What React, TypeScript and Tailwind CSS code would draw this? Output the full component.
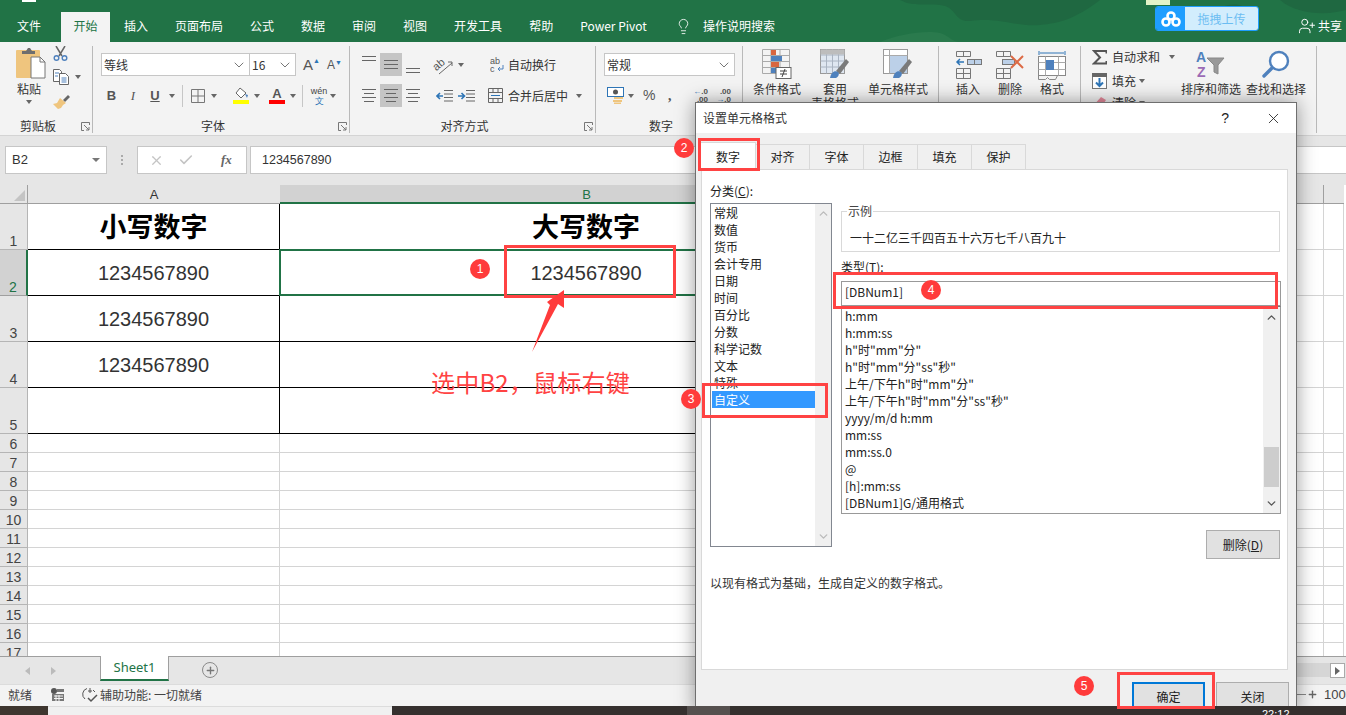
import type { ReactNode } from "react";
import { X, Check, ChevronUp, ChevronDown, Lightbulb, UserPlus, Plus } from "lucide-react";

const tabs = ["插入", "页面布局", "公式", "数据", "审阅", "视图", "开发工具", "帮助", "Power Pivot"];
const categories = ["常规", "数值", "货币", "会计专用", "日期", "时间", "百分比", "分数", "科学记数", "文本", "特殊", "自定义"];
const formats = [
  "h:mm",
  "h:mm:ss",
  'h"时"mm"分"',
  'h"时"mm"分"ss"秒"',
  '上午/下午h"时"mm"分"',
  '上午/下午h"时"mm"分"ss"秒"',
  "yyyy/m/d h:mm",
  "mm:ss",
  "mm:ss.0",
  "@",
  "[h]:mm:ss",
  "[DBNum1]G/通用格式",
];
const dialogTabs = ["对齐", "字体", "边框", "填充", "保护"];
const rowNumbers = [1, 2, 3, 4, 5, 6, 7, 8, 9, 10, 11, 12, 13, 14, 15, 16, 17];

function Caret() {
  return <span className="inline-block w-0 h-0 border-x-[3.5px] border-x-transparent border-t-[4px] border-t-[#666]" />;
}

function Sep() {
  return <span className="w-px h-[22px] bg-[#c6c6c6]" />;
}

function Launcher() {
  return (
    <svg className="absolute right-[2px] top-[3px]" width="9" height="9" viewBox="0 0 9 9" fill="none" stroke="#777">
      <path d="M.5 3V.5H8.5V3M.5 3v5.5H3M3 3l5 5M8 5v3H5" />
    </svg>
  );
}

function Group({ className, label, launcher, children }: { className: string; label?: string; launcher?: boolean; children: ReactNode }) {
  return (
    <div className={`flex flex-col shrink-0 mt-[4px] h-[87px] border-r border-[#b9b9b9] ${className}`}>
      <div className="flex-1 min-h-0">{children}</div>
      <div className="relative h-[14px] leading-[14px] pr-[16px] text-center text-[12px] text-[#333]">
        {label}
        {launcher && <Launcher />}
      </div>
    </div>
  );
}

function Select({ className, text }: { className: string; text: string }) {
  return (
    <div className={`h-[23px] flex items-center justify-between bg-white border border-[#c6c6c6] pl-[2px] pr-[2px] text-[12px] text-[#333] ${className}`}>
      <span>{text}</span>
      <ChevronDown size={16} strokeWidth={1.1} color="#444" />
    </div>
  );
}

function Lines({ widths, on, offset }: { widths: number[]; on?: boolean; offset?: string }) {
  return (
    <span className={`w-[22px] h-[23px] flex flex-col gap-[3px] ${offset ?? "justify-center"} items-center ${on ? "bg-[#c5c5c5]" : ""}`}>
      {widths.map((w, i) => (
        <span key={i} className={`h-px bg-[#666] ${w === 14 ? "w-[14px]" : w === 10 ? "w-[10px]" : "w-[12px]"}`} />
      ))}
    </span>
  );
}

function BigButton({ className, icon, label }: { className: string; icon: ReactNode; label: string }) {
  return (
    <div className={`flex flex-col items-center shrink-0 ${className}`}>
      <div className="h-[32px] flex items-center">{icon}</div>
      <div className="text-[12px] leading-[14px] mt-[2px] text-[#333] whitespace-pre text-center">{label}</div>
    </div>
  );
}

function PasteIcon() {
  return (
    <svg width="30" height="33" viewBox="0 0 30 33">
      <rect x="0" y="4" width="24" height="28" rx="1" fill="#efc57e" />
      <path d="M6 8V5h4l2-3h2l2 3h3v3z" fill="#6e6e6e" />
      <path d="M15 11h9l5 5v16H15z" fill="#fff" stroke="#777" />
      <path d="M24 11v5h5" fill="none" stroke="#777" />
    </svg>
  );
}

function CutIcon() {
  return (
    <svg width="15" height="15" viewBox="0 0 15 15" fill="none">
      <path d="M3 0l6 10M12 0L6 10" stroke="#666" strokeWidth="1.5" />
      <circle cx="3.5" cy="12" r="2.3" stroke="#4f81bd" strokeWidth="1.4" />
      <circle cx="11.5" cy="12" r="2.3" stroke="#4f81bd" strokeWidth="1.4" />
    </svg>
  );
}

function CopyIcon() {
  return (
    <svg width="16" height="16" viewBox="0 0 16 16" fill="none">
      <path d="M.5.5h6l2 2v10h-8z" fill="#fff" stroke="#666" />
      <path d="M6.5 4.5h6l3 3v8h-9z" fill="#fff" stroke="#666" />
      <path d="M2 4h4M2 7h3M8.500 9h5M8.500 11h5M8.500 13h5" stroke="#4f81bd" />
    </svg>
  );
}

function BrushIcon() {
  return (
    <svg width="17" height="14" viewBox="0 0 17 14">
      <path d="M10 5l5-5 2 2-5 5z" fill="#666" />
      <path d="M7 3l6 5-3 2-2 3-3 1-5-5 4-1z" fill="#efc57e" />
    </svg>
  );
}

function BorderIcon() {
  return (
    <svg width="14" height="14" viewBox="0 0 14 14" fill="none" stroke="#777">
      <path d="M.5.5h13v13H.5zM7 .5v13M.5 7h13" />
    </svg>
  );
}

function FillIcon() {
  return (
    <span className="w-[16px] flex flex-col items-center">
      <svg width="15" height="13" viewBox="0 0 15 13" fill="none">
        <path d="M6 1l6 5-5 5-5-5z" stroke="#666" fill="#fff" />
        <path d="M11 7l3 1-1 3z" fill="#4f81bd" />
      </svg>
      <span className="w-[16px] h-[4px] bg-[#ffff00]" />
    </span>
  );
}

function FontColorIcon() {
  return (
    <span className="w-[16px] flex flex-col items-center leading-none">
      <span className="h-[12px] text-[13px] leading-[12px] font-bold text-[#555] font-['Liberation_Sans']">A</span>
      <span className="w-[16px] h-[4px] bg-[#ff0000]" />
    </span>
  );
}

function WrapIcon() {
  return (
    <svg width="16" height="16" viewBox="0 0 16 16" fill="none">
      <text x="0" y="7" fontSize="9" fill="#555" fontFamily="Liberation Sans">ab</text>
      <text x="0" y="15" fontSize="9" fill="#555" fontFamily="Liberation Sans">c</text>
      <path d="M13 8v4H8m2-2l-2 2 2 2" stroke="#4f81bd" />
    </svg>
  );
}

function OrientIcon() {
  return (
    <svg width="26" height="20" viewBox="0 0 26 20" fill="none">
      <text x="2" y="13" fontSize="11" fill="#555" fontFamily="Liberation Sans" transform="rotate(-40 8 10)">ab</text>
      <path d="M8 19L21 8m-4-1h4v4" stroke="#666" />
    </svg>
  );
}

function IndentIcon({ flip }: { flip?: boolean }) {
  return (
    <svg width="18" height="14" viewBox="0 0 18 14" fill="none">
      <path d="M8 1.500h9M8 5h9M8 8.500h9M8 12h9" stroke="#666" />
      <path d={flip ? "M0 7h6M3.500 4L6.500 7l-3 3" : "M7 7H1M4 4L1 7l3 3"} stroke="#2e75b6" strokeWidth="1.600" />
    </svg>
  );
}

function MergeIcon() {
  return (
    <svg width="15" height="15" viewBox="0 0 15 15" fill="none">
      <path d="M.5.500h14v14H.5zM.5 4.500h14M.5 10.500h14M5 .500v4M10 .500v4M5 10.500v4M10 10.500v4" stroke="#666" />
      <path d="M3 7.500h9" stroke="#2e75b6" />
    </svg>
  );
}

function CurrencyIcon() {
  return (
    <svg width="17" height="17" viewBox="0 0 17 17">
      <rect x=".5" y=".5" width="16" height="9" fill="#fff" stroke="#2e75b6" />
      <circle cx="8.500" cy="5" r="2.500" fill="#555" />
      <rect x="7" y="10" width="9" height="2" fill="#efc57e" />
      <rect x="6" y="13" width="9" height="2" fill="#efc57e" />
      <rect x="7" y="15.500" width="7" height="1.500" fill="#efc57e" />
    </svg>
  );
}

function DecimalIcon({ more }: { more?: boolean }) {
  return (
    <span className="w-[20px] flex flex-col text-[8px] leading-[8px] text-[#555] font-['Liberation_Sans'] font-bold items-end">
      <span>
        {more && <span className="text-[#2e75b6]">←</span>}
        {more ? ".0" : ".00"}
      </span>
      <span>
        {!more && <span className="text-[#2e75b6]">→</span>}
        {more ? ".00" : ".0"}
      </span>
    </span>
  );
}

function CondIcon() {
  return (
    <svg width="30" height="30" viewBox="0 0 30 30" fill="none">
      <path d="M.5.500h27v24H.5zM9 .500v24M18 .500v24M.5 6.500h27M.5 12.500h27M.5 18.500h27" stroke="#aaa" />
      <rect x="9" y="1" width="5" height="5" fill="#d9663f" />
      <rect x="9" y="7" width="11" height="5" fill="#4f81bd" />
      <rect x="9" y="13" width="8" height="5" fill="#d9663f" />
      <rect x="9" y="19" width="5" height="5" fill="#4f81bd" />
      <rect x="14" y="18.500" width="15" height="11" fill="#fff" stroke="#666" />
      <path d="M18 22h7M18 25h7M23 20l-3 8" stroke="#444" />
    </svg>
  );
}

function TableIcon() {
  return (
    <svg width="30" height="30" viewBox="0 0 30 30" fill="none">
      <rect x=".5" y=".5" width="24" height="24" fill="#dfe7f1" stroke="#999" />
      <path d="M.5 6h24M.5 12h24M.5 18h24M6.500 .500v24M12.500 .500v24M18.500 .500v24" stroke="#aab4c2" />
      <rect x=".5" y=".5" width="24" height="5" fill="#bdbdbd" />
      <path d="M16 22l10-12 3 3-9 12z" fill="#7a7a7a" />
      <path d="M10 29c1-6 5-8 8-6 2 2 0 5-2 6z" fill="#4f81bd" />
    </svg>
  );
}

function StyleIcon() {
  return (
    <svg width="30" height="30" viewBox="0 0 30 30" fill="none">
      <rect x=".5" y=".5" width="24" height="24" fill="#fff" stroke="#999" />
      <path d="M.5 6.500h24M6.500 .500v24" stroke="#aaa" />
      <rect x="7" y="7" width="17" height="17" fill="#bcd0e8" />
      <path d="M16 22l10-12 3 3-9 12z" fill="#7a7a7a" />
      <path d="M10 29c1-6 5-8 8-6 2 2 0 5-2 6z" fill="#4f81bd" />
    </svg>
  );
}

function InsertIcon() {
  return (
    <svg width="27" height="29" viewBox="0 0 27 29" fill="none">
      <path d="M1.500 1.500h14v5h-14zM8.500 1.500v5M1.500 18.500h14v10h-14zM8.500 18.500v10M1.500 23.500h14" stroke="#777" />
      <rect x="12.500" y="9.500" width="14" height="5" fill="#bcd0e8" stroke="#777" />
      <path d="M19.500 9.500v5" stroke="#777" />
      <path d="M9 12H2m3-3l-3 3 3 3" stroke="#2e75b6" strokeWidth="1.500" />
    </svg>
  );
}

function DeleteIcon() {
  return (
    <svg width="30" height="29" viewBox="0 0 30 29" fill="none">
      <path d="M1.500 1.500h14v5h-14zM8.500 1.500v5M1.500 18.500h14v10h-14zM8.500 18.500v10M1.500 23.500h14" stroke="#777" />
      <rect x="7.500" y="9.500" width="12" height="5" fill="#bcd0e8" stroke="#777" />
      <path d="M16 6l12 12M28 6L16 18" stroke="#dc6a45" strokeWidth="2" />
    </svg>
  );
}

function FormatIcon() {
  return (
    <svg width="28" height="31" viewBox="0 0 28 31" fill="none">
      <path d="M1 2v4M27 2v4M2 4h24" stroke="#2e75b6" />
      <rect x=".5" y="7.500" width="27" height="19" fill="#fff" stroke="#888" />
      <path d="M7.500 7.500v19M20.500 7.500v19M.5 13.500h27M.5 20.500h27" stroke="#aaa" />
      <rect x="8" y="11" width="8" height="10" fill="#4f81bd" />
      <path d="M.5 26.500v4h7l2-2 2 2h6l2-4" stroke="#888" />
    </svg>
  );
}

function SigmaIcon() {
  return (
    <svg width="15" height="15" viewBox="0 0 15 15" fill="none">
      <path d="M14.500 3.500V1H2l6 6.500L2 13.500h12.500V11" stroke="#555" strokeWidth="2" />
    </svg>
  );
}

function FillDownIcon() {
  return (
    <svg width="15" height="16" viewBox="0 0 15 16" fill="none">
      <rect x=".5" y=".5" width="14" height="15" fill="#fff" stroke="#777" />
      <rect x="0" y="0" width="15" height="4" fill="#666" />
      <path d="M7.500 5v8M4 9.500l3.500 3.500L11 9.500" stroke="#2e75b6" strokeWidth="2" />
    </svg>
  );
}

function EraserIcon() {
  return (
    <svg width="15" height="14" viewBox="0 0 15 14">
      <path d="M9 1l5 3-6 9H3L1 10z" fill="#e58a9b" />
    </svg>
  );
}

function SortIcon() {
  return (
    <svg className="overflow-visible" width="30" height="28" viewBox="0 0 30 28" fill="none">
      <text x="0" y="12" fontSize="14" fontWeight="700" fill="#4f81bd" fontFamily="Liberation Sans">A</text>
      <text x="1" y="27" fontSize="14" fontWeight="700" fill="#9b6bb5" fontFamily="Liberation Sans">Z</text>
      <path d="M11 8h17l-6 7v9l-4-2v-7z" fill="#999" stroke="#888" />
    </svg>
  );
}

function FindIcon() {
  return (
    <svg width="28" height="28" viewBox="0 0 28 28" fill="none">
      <circle cx="17" cy="11" r="9" stroke="#4f81bd" strokeWidth="2.400" fill="#fff" />
      <path d="M10 18l-8 8" stroke="#4f81bd" strokeWidth="3.400" strokeLinecap="round" />
    </svg>
  );
}

function Ribbon() {
  return (
    <div className="h-[94px] shrink-0 flex bg-[#f3f3f3] border-b border-[#d4d4d4]">
      <Group className="w-[93px]" label="剪贴板" launcher>
        <div className="flex pl-[12px]">
          <div className="w-[34px] flex flex-col items-center">
            <span className="flex ml-[4px]"><PasteIcon /></span>
            <span className="text-[12px] leading-[14px] mt-[3px] text-[#333]">粘贴</span>
            <span className="flex mt-[4px]"><Caret /></span>
          </div>
          <div className="ml-[7px] flex flex-col">
            <CutIcon />
            <div className="flex items-center gap-[6px] mt-[8px]"><CopyIcon /><Caret /></div>
            <div className="mt-[10px]"><BrushIcon /></div>
          </div>
        </div>
      </Group>
      <Group className="w-[257px]" label="字体" launcher>
        <div className="pl-[8px] pt-[7px]">
          <div className="flex items-center">
            <Select className="w-[149px]" text="等线" />
            <Select className="w-[47px] -ml-px" text="16" />
            <span className="ml-[7px] w-[16px] text-[15px] text-[#555] leading-none font-['Liberation_Sans'] flex items-start">A<span className="text-[#2e75b6] text-[7px]">▲</span></span>
            <span className="ml-[8px] w-[16px] text-[12px] text-[#555] leading-none font-['Liberation_Sans'] flex items-start">A<span className="text-[#2e75b6] text-[7px]">▼</span></span>
          </div>
          <div className="flex items-center h-[23px] mt-[8px] text-[13px] text-[#555] font-['Liberation_Sans']">
            <span className="w-[21px] text-center font-bold">B</span>
            <span className="w-[22px] text-center italic font-['Liberation_Serif']">I</span>
            <span className="w-[22px] text-center font-bold underline">U</span>
            <span className="flex ml-[3px] mr-[7px]"><Caret /></span>
            <Sep />
            <span className="ml-[8px] mr-[6px] flex"><BorderIcon /></span>
            <Caret />
            <span className="ml-[8px] mr-[8px]"><Sep /></span>
            <FillIcon />
            <span className="flex ml-[5px] mr-[9px]"><Caret /></span>
            <FontColorIcon />
            <span className="flex ml-[5px] mr-[6px]"><Caret /></span>
            <Sep />
            <span className="ml-[8px] mr-[3px] w-[16px] flex flex-col items-center leading-none">
              <span className="text-[9px] leading-[10px] text-[#444]">wén</span>
              <span className="text-[9px] leading-[10px] text-[#2e75b6]">文</span>
            </span>
            <Caret />
          </div>
        </div>
      </Group>
      <Group className="w-[246px]" label="对齐方式" launcher>
        <div className="pl-[8px] pt-[7px]">
          <div className="flex items-center h-[23px]">
            <Lines widths={[14, 14]} offset="justify-start pt-[3px]" />
            <Lines widths={[14, 14, 14]} on />
            <Lines widths={[14, 14]} offset="justify-end pb-[3px]" />
            <span className="ml-[4px]"><Sep /></span>
            <span className="ml-[3px] mr-[1px] flex"><OrientIcon /></span>
            <Caret />
            <span className="ml-[18px]"><Sep /></span>
            <span className="ml-[8px] flex"><WrapIcon /></span>
            <span className="ml-[2px] text-[12px] text-[#333]">自动换行</span>
          </div>
          <div className="flex items-center h-[23px] mt-[8px]">
            <Lines widths={[14, 10, 14, 10]} />
            <Lines widths={[14, 10, 14, 10]} on />
            <Lines widths={[14, 10, 14, 10]} />
            <span className="ml-[4px]"><Sep /></span>
            <span className="ml-[8px] flex"><IndentIcon /></span>
            <span className="ml-[4px] flex"><IndentIcon flip /></span>
            <span className="ml-[5px]"><Sep /></span>
            <span className="ml-[7px] flex"><MergeIcon /></span>
            <span className="ml-[5px] text-[12px] text-[#333]">合并后居中</span>
            <span className="flex ml-[8px]"><Caret /></span>
          </div>
        </div>
      </Group>
      <Group className="w-[147px]" label="数字" launcher>
        <div className="pl-[8px] pt-[7px]">
          <Select className="w-[131px]" text="常规" />
          <div className="flex items-center h-[23px] mt-[8px] text-[#555]">
            <span className="ml-[3px] flex"><CurrencyIcon /></span>
            <span className="flex ml-[4px]"><Caret /></span>
            <span className="ml-[9px] w-[14px] text-[14px] font-['Liberation_Sans']">%</span>
            <span className="ml-[11px] w-[8px] text-[14px] font-bold font-['Liberation_Serif']">,</span>
            <span className="ml-[7px]"><Sep /></span>
            <span className="ml-[5px] flex"><DecimalIcon more /></span>
            <span className="ml-[3px] flex"><DecimalIcon /></span>
          </div>
        </div>
      </Group>
      <Group className="w-[196px]">
        <div className="flex pl-[2px] pt-[2px]">
          <BigButton className="w-[64px]" icon={<CondIcon />} label="条件格式" />
          <BigButton className="w-[52px]" icon={<TableIcon />} label={"套用\n表格格式"} />
          <BigButton className="w-[74px]" icon={<StyleIcon />} label="单元格样式" />
        </div>
      </Group>
      <Group className="w-[142px]">
        <div className="flex pl-[8px] pt-[2px]">
          <BigButton className="w-[42px]" icon={<InsertIcon />} label="插入" />
          <BigButton className="w-[42px]" icon={<DeleteIcon />} label="删除" />
          <BigButton className="w-[42px]" icon={<FormatIcon />} label="格式" />
        </div>
      </Group>
      <Group className="w-[236px]">
        <div className="flex pl-[11px] pt-[2px]">
          <div className="w-[89px] flex flex-col text-[12px] text-[#333]">
            <div className="flex items-center h-[18px]">
              <SigmaIcon />
              <span className="ml-[5px]">自动求和</span>
              <span className="flex ml-[9px]"><Caret /></span>
            </div>
            <div className="flex items-center h-[18px] mt-[6px]">
              <FillDownIcon />
              <span className="ml-[5px]">填充</span>
              <span className="flex ml-[3px]"><Caret /></span>
            </div>
            <div className="flex items-center h-[18px] mt-[4px]">
              <EraserIcon />
              <span className="ml-[5px]">清除</span>
              <span className="flex ml-[3px]"><Caret /></span>
            </div>
          </div>
          <BigButton className="w-[60px]" icon={<SortIcon />} label="排序和筛选" />
          <BigButton className="w-[60px] ml-[5px]" icon={<FindIcon />} label="查找和选择" />
        </div>
      </Group>
    </div>
  );
}

function FormulaBar() {
  return (
    <div className="h-[49px] shrink-0 bg-[#e6e6e6] flex pl-[5px] pt-[10px] text-[12px] text-[#333]">
      <div className="w-[102px] h-[28px] bg-white border border-[#c6c6c6] flex items-center justify-between pl-[6px] pr-[6px] text-[13px] font-['Liberation_Sans']">
        B2
        <span className="inline-block w-0 h-0 border-x-[4px] border-x-transparent border-t-[4px] border-t-[#777]" />
      </div>
      <div className="w-[30px] h-[28px] flex flex-col items-center justify-center gap-[2px]">
        <span className="w-[2px] h-[2px] bg-[#aaa]" />
        <span className="w-[2px] h-[2px] bg-[#aaa]" />
        <span className="w-[2px] h-[2px] bg-[#aaa]" />
      </div>
      <div className="w-[110px] h-[28px] bg-white border border-[#c6c6c6] flex items-center pl-[11px]">
        <X size={15} strokeWidth={2} color="#c4c4c4" />
        <Check size={16} strokeWidth={2.4} color="#c4c4c4" className="ml-[14px]" />
        <span className="ml-[27px] italic font-bold font-['Liberation_Serif'] text-[#666] text-[13px]">fx</span>
      </div>
      <div className="flex-1 h-[28px] ml-[3px] bg-white border-y border-l border-[#c6c6c6] flex items-center pl-[11px] font-['Liberation_Sans'] text-[12.500px]">
        1234567890
      </div>
    </div>
  );
}

function Sheet() {
  return (
    <div className="flex-1 min-h-0 overflow-hidden bg-white">
      <div className="grid grid-cols-[28px_252px_613px_431px_20px_2px] grid-rows-[19px_46px_46px_46px_46px_46px_19px_19px_19px_19px_19px_19px_19px_19px_19px_19px_19px_19px] font-['Liberation_Sans']">
        <div className="bg-[#e6e6e6] border-b border-r border-[#9f9f9f] flex items-end justify-end pr-[2px] pb-[2px]">
          <span className="w-0 h-0 border-l-[11px] border-l-transparent border-b-[11px] border-b-[#c4c4c4]" />
        </div>
        <div className="bg-[#e6e6e6] border-b border-[#9f9f9f] text-[13px] text-center leading-[20px] text-[#333]">A</div>
        <div className="bg-[#d2d2d2] border-b-2 border-[#217346] text-[13px] text-center leading-[20px] text-[#217346]">B</div>
        <div className="bg-[#e6e6e6] border-b border-r border-[#9f9f9f]" />
        <div className="bg-[#e6e6e6] border-b border-[#9f9f9f]" />
        <div className="bg-white" />
        {rowNumbers.map((n) => {
          const block = n <= 5;
          const selected = n === 2;
          return (
            <div key={n} className="contents">
              <div className={`flex items-end justify-center text-[14px] leading-[16px] border-b ${selected ? "bg-[#d2d2d2] text-[#217346] border-r-2 border-r-[#217346] border-b-[#9f9f9f]" : "bg-[#e6e6e6] text-[#444] border-r border-[#b5b5b5]"}`}>
                {n}
              </div>
              <div className={`flex items-center justify-center border-r border-b ${block ? "border-black" : "border-[#d4d4d4]"}`}>
                {n === 1 && <span className="text-[27px] font-bold text-black font-['Noto_Sans_CJK_SC']">小写数字</span>}
                {n >= 2 && n <= 4 && <span className="text-[20px] text-[#333] pt-px">1234567890</span>}
              </div>
              <div className={`flex items-center justify-center ${selected ? "relative z-[1] -ml-px -mt-px border-2 border-[#217346]" : `border-r border-b ${block ? "border-black" : "border-[#d4d4d4]"}`}`}>
                {n === 1 && <span className="text-[27px] font-bold text-black font-['Noto_Sans_CJK_SC']">大写数字</span>}
                {selected && <span className="text-[20px] text-[#333] pt-px">1234567890</span>}
              </div>
              <div className="border-r border-b border-[#d4d4d4]" />
              <div className="border-r border-b border-[#d4d4d4]" />
              <div className="bg-white" />
            </div>
          );
        })}
      </div>
    </div>
  );
}

function SheetTabs() {
  return (
    <div className="h-[28px] shrink-0 bg-[#e6e6e6] border-t border-[#9f9f9f] flex">
      <div className="w-[100px] flex items-center pl-[25px] gap-[21px]">
        <span className="w-0 h-0 border-y-[4px] border-y-transparent border-r-[5px] border-r-[#bbb]" />
        <span className="w-0 h-0 border-y-[4px] border-y-transparent border-l-[5px] border-l-[#bbb]" />
      </div>
      <div className="w-[69px] h-[25px] -mt-px bg-white border-x border-[#9f9f9f] border-b-2 border-b-[#217346] text-[13px] text-[#217346] flex items-center justify-center font-['Noto_Sans']">
        Sheet1
      </div>
      <div className="ml-[33px] mt-[5px] w-[16px] h-[16px] rounded-full border border-[#8a8a8a] flex items-center justify-center">
        <Plus size={11} strokeWidth={3} color="#777" />
      </div>
      <div className="flex-1" />
      <div className="w-[130px] h-[14px] mt-[6px] bg-[#d6d6d6]" />
      <div className="w-[15px] h-[15px] mt-[6px] mr-px bg-white border border-[#aaa] flex items-center justify-center">
        <span className="w-0 h-0 border-y-[4px] border-y-transparent border-l-[5px] border-l-[#666]" />
      </div>
    </div>
  );
}

function StatusBar() {
  return (
    <div className="h-[22px] shrink-0 bg-[#f3f3f3] border-t border-[#dcdcdc] flex items-center pb-[2px] text-[12px] text-[#444]">
      <span className="ml-[8px]">就绪</span>
      <svg className="ml-[19px]" width="13" height="13" viewBox="0 0 13 13">
        <circle cx="3" cy="3" r="3" fill="#555" />
        <path d="M6 1h7v3H6zM1 6h12v7H1z" fill="#777" />
        <path d="M3 8h9M3 10.500h9M5 7v6M8 7v6" stroke="#f3f3f3" />
      </svg>
      <svg className="ml-[18px]" width="16" height="16" viewBox="0 0 16 16" fill="none" stroke="#555">
        <path d="M5 1.500A6 6 0 0 0 3 12M8 1v5M6 4h4M11 3l2 2" />
        <path d="M6 11l3 3 6-6" strokeWidth="1.500" />
      </svg>
      <span className="ml-[2px]">辅助功能: 一切就绪</span>
      <div className="flex-1" />
      <span className="w-[10px] h-px bg-[#888]" />
      <Plus size={11} strokeWidth={3} color="#666" className="ml-[1px]" />
      <span className="ml-[6px] w-[22px] overflow-hidden text-[13px] font-['Liberation_Sans']">100%</span>
    </div>
  );
}

function Taskbar() {
  return (
    <div className="relative z-20 h-[9px] shrink-0 flex overflow-hidden bg-[#35302e]">
      <div className="w-[48px] bg-[#3e362f]" />
      <div className="w-[344px] bg-[#f0f0f0] border-t border-[#dcdcdc]" />
      <div className="w-[295px]" />
      <div className="w-[43px] bg-[#55504e]" />
      <div className="flex-1 relative">
        <span className="absolute left-[532px] top-[2px] text-[11px] leading-[12px] text-white font-['Liberation_Sans']">22:12</span>
      </div>
    </div>
  );
}

function FormatDialog() {
  return (
    <div className="absolute left-[695px] top-[102px] z-10 w-[602px] h-[612px] bg-[#f0f0f0] border border-[#6f6f6f] shadow-[0_0_18px_rgba(0,0,0,0.4)] flex flex-col text-[12px] text-[#222]">
      <div className="h-[30px] shrink-0 bg-white flex items-center pl-[7px]">
        <span className="text-[#333]">设置单元格格式</span>
        <span className="ml-auto text-[14px] font-['Liberation_Sans']">?</span>
        <X size={17} strokeWidth={1.2} color="#222" className="ml-[36px] mr-[14px]" />
      </div>
      <div className="h-[36px] shrink-0 flex items-end pl-[4px]">
        <div className="relative z-[1] w-[56px] h-[28px] -mb-px bg-white border-x border-t border-[#d9d9d9] flex items-center justify-center">数字</div>
        {dialogTabs.map((t) => (
          <div key={t} className="w-[54px] h-[25px] bg-[#f0f0f0] border-r border-t border-[#d9d9d9] flex items-center justify-center">{t}</div>
        ))}
      </div>
      <div className="mx-[5px] w-[587px] h-[501px] shrink-0 bg-white border border-[#d9d9d9] flex flex-col pl-[8px] pr-[6px]">
        <div className="flex">
          <div className="w-[122px] shrink-0">
            <div className="h-[33px] pt-[14px] leading-[14px]">分类(<span className="underline">C</span>):</div>
            <div className="h-[344px] border border-[#828790] flex">
              <div className="w-[104px] pl-px">
                {categories.map((c) => (
                  <div key={c} className={`h-[17px] leading-[17px] pl-[2px] ${c === "自定义" ? "bg-[#3399ff] text-white" : ""}`}>{c}</div>
                ))}
              </div>
              <div className="flex-1 bg-[#f0f0f0] flex flex-col items-center justify-between py-[3px]">
                <ChevronUp size={13} strokeWidth={2.5} color="#bbb" />
                <ChevronDown size={13} strokeWidth={2.5} color="#bbb" />
              </div>
            </div>
          </div>
          <div className="ml-[9px] flex-1">
            <div className="relative mt-[41px] w-[439px] h-[41px] border border-[#d9d9d9] pl-[8px] pt-[17px] leading-[17px]">
              <span className="absolute left-[5px] -top-[8px] bg-white px-px leading-[14px] text-[#444]">示例</span>
              一十二亿三千四百五十六万七千八百九十
            </div>
            <div className="h-[14px] mt-[8px] leading-[14px]">类型(<span className="underline">T</span>):</div>
            <div className="w-[440px] h-[25px] mt-[7px] pb-[4px] border border-[#999] flex items-center pl-[3px]">[DBNum1]</div>
            <div className="w-[440px] h-[208px] border border-[#999] border-t-[#777] flex">
              <div className="flex-1 pl-[3px]">
                {formats.map((f) => (
                  <div key={f} className="h-[17px] leading-[17px] whitespace-nowrap">{f}</div>
                ))}
              </div>
              <div className="w-[17px] bg-[#f0f0f0] flex flex-col items-center pt-[4px] pb-[3px]">
                <ChevronUp size={13} strokeWidth={2.5} color="#555" />
                <div className="w-[15px] h-[40px] mt-[123px] bg-[#cdcdcd]" />
                <ChevronDown size={13} strokeWidth={2.5} color="#555" className="mt-auto" />
              </div>
            </div>
            <div className="flex justify-end mr-px mt-[16px]">
              <div className="w-[74px] h-[29px] bg-[#e1e1e1] border border-[#adadad] flex items-center justify-center">删除(<span className="underline">D</span>)</div>
            </div>
          </div>
        </div>
        <div className="mt-[17px] leading-[14px] text-[#333]">以现有格式为基础，生成自定义的数字格式。</div>
      </div>
      <div className="flex justify-end mt-[12px] pr-[7px]">
        <div className="w-[73px] h-[29px] bg-[#e1e1e1] border-2 border-[#0078d7] flex items-center justify-center">确定</div>
        <div className="w-[73px] h-[29px] ml-[11px] bg-[#e1e1e1] border border-[#adadad] flex items-center justify-center">关闭</div>
      </div>
    </div>
  );
}

function Badge({ className, n }: { className: string; n: number }) {
  return (
    <span className={`absolute z-30 w-[20px] h-[20px] rounded-full bg-[#ff3b3b] text-white text-[12px] flex items-center justify-center font-['Liberation_Sans'] ${className}`}>
      {n}
    </span>
  );
}

function Annotations() {
  const box = "absolute z-30 border-[3px] border-[#ff4343]";
  return (
    <>
      <div className={`${box} left-[504px] top-[245px] w-[172px] h-[53px]`} />
      <div className={`${box} left-[698px] top-[138px] w-[62px] h-[33px]`} />
      <div className={`${box} left-[702px] top-[383px] w-[126px] h-[35px]`} />
      <div className={`${box} left-[833px] top-[272px] w-[445px] h-[37px]`} />
      <div className={`${box} left-[1117px] top-[672px] w-[98px] h-[37px]`} />
      <Badge className="left-[470px] top-[259px]" n={1} />
      <Badge className="left-[674px] top-[138px]" n={2} />
      <Badge className="left-[681px] top-[389px]" n={3} />
      <Badge className="left-[921px] top-[280px]" n={4} />
      <Badge className="left-[1074px] top-[676px]" n={5} />
      <svg className="absolute z-30 left-[525px] top-[285px]" width="45" height="72" viewBox="525 285 45 72">
        <polygon points="564,290 564,308 558,304 532,352 550,305 547,302" fill="#ff3b3b" />
      </svg>
      <span className="absolute z-30 left-[431px] top-[364px] text-[24px] leading-[36px] tracking-[0.2px] text-[#ff4343] whitespace-nowrap font-['Noto_Sans_CJK_SC']">选中B2，鼠标右键</span>
    </>
  );
}

function TitleBar() {
  return (
    <div className="relative h-[42px] shrink-0 bg-[#217346] text-white text-[12px]">
      <svg className="absolute left-[880px] top-0" width="466" height="42" viewBox="0 0 466 42" fill="#1f6841">
        <path d="M20 0c15 8 30 2 45 6 12 4 10 16 25 15 30-4 45 6 70 4 20-2 35-6 60-25z" />
        <path d="M0 42c20-8 45-12 60-9 8 2 12 9 20 9z" fill="#2a7a4d" />
        <path d="M340 8c12-6 24-4 30 4 4 8-4 16-14 14-12-2-20-10-16-18z" />
        <path d="M400 0h66v10c-20 6-50 4-66-10z" />
      </svg>
      <span className="absolute left-[1146px] top-0 w-[24px] h-[5px] bg-[#e3f3c8]" />
      <span className="absolute left-[22px] top-0 w-[14px] h-[2px] bg-white" />
      <div className="absolute left-[1155px] top-[6px] w-[104px] h-[25px] flex rounded-[3px] overflow-hidden border border-[#1e9eff]">
        <div className="w-[29px] bg-[#1e9eff] flex items-center justify-center">
          <svg width="20" height="16" viewBox="0 0 20 16" fill="none" stroke="#fff" strokeWidth="2.600">
            <circle cx="10" cy="5" r="3.500" />
            <circle cx="5" cy="11" r="3.500" />
            <circle cx="15" cy="11" r="3.500" />
          </svg>
        </div>
        <div className="flex-1 bg-[#d2edfd] text-[#6cbdf2] flex items-center justify-center">拖拽上传</div>
      </div>
      <div className="absolute left-[1298px] top-[17px] flex items-center">
        <UserPlus size={18} strokeWidth={1.3} />
        <span className="ml-[2px]">共享</span>
      </div>
      <div className="absolute inset-x-0 bottom-0 h-[30px] flex items-center pl-[17px] pb-[2px] gap-[27px]">
        <span className="mr-[5px]">文件</span>
        <span className="w-[49px] h-[30px] mt-[2px] pb-[2px] ml-[-12px] mr-[-13px] bg-[#f3f3f3] text-[#217346] flex items-center justify-center">开始</span>
        {tabs.map((t) => (
          <span key={t} className="whitespace-nowrap">{t}</span>
        ))}
        <span className="flex items-center ml-[1px]">
          <Lightbulb size={17} strokeWidth={1.2} />
          <span className="ml-[11px]">操作说明搜索</span>
        </span>
      </div>
    </div>
  );
}

export default function App() {
  return (
    <div className="relative w-[1346px] h-[715px] overflow-hidden flex flex-col font-['Noto_Sans_CJK_SC',sans-serif]">
      <TitleBar />
      <Ribbon />
      <FormulaBar />
      <Sheet />
      <SheetTabs />
      <StatusBar />
      <Taskbar />
      <FormatDialog />
      <Annotations />
    </div>
  );
}
